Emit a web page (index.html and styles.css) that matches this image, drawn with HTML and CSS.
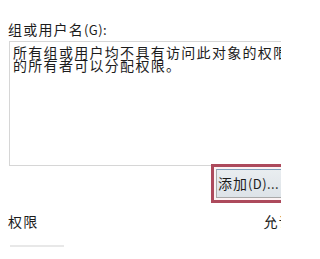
FILE: index.html
```html
<!DOCTYPE html>
<html lang="zh-CN">
<head>
<meta charset="utf-8">
<link rel="stylesheet" href="styles.css">
</head>
<body>
<div class="panel">
  <div class="label">组或用户名<span class="key">(G):</span></div>
  <div class="box">
    <div class="line">所有组或用户均不具有访问此对象的权限。但是，此对象</div>
    <div class="line">的所有者可以分配权限。</div>
  </div>
  <div class="actions">
    <div class="highlight">
      <div class="btn">添加<span class="key">(D)...</span></div>
    </div>
  </div>
  <div class="perm-row">
    <span>权限</span>
    <span>允许</span>
  </div>
  <div class="faint"></div>
</div>
</body>
</html>
```

FILE: styles.css
```css
html, body {
  margin: 0;
  padding: 0;
  background: #ffffff;
  overflow: hidden;
}
body {
  width: 281px;
  height: 259px;
  font-family: "Noto Sans CJK SC", "Noto Sans", sans-serif;
  font-size: 14px;
  color: #1c1c1c;
}
.panel {
  padding-left: 8px;
}
.label {
  margin-top: 21px;
  line-height: 16px;
  letter-spacing: 1.2px;
  white-space: nowrap;
}
.key {
  font-size: 13px;
  letter-spacing: 0.4px;
}
.box {
  box-sizing: border-box;
  margin-top: 3px;
  margin-left: 1px;
  width: 300px;
  height: 125px;
  border: 1px solid #d6d6d6;
  border-right: none;
  padding: 4px 0 0 3px;
  overflow: hidden;
}
.line {
  line-height: 13px;
  letter-spacing: 1.3px;
  white-space: nowrap;
}
.actions {
  display: flex;
  margin-top: -2px;
  padding-left: 203px;
}
.highlight {
  flex: none;
  width: 110px;
  border: 3px solid #ad4a5c;
  padding: 2px;
  background: #fbf3f4;
}
.btn {
  box-sizing: border-box;
  height: 29px;
  border: 1px solid #a9a9a9;
  border-top-color: #7e9fbb;
  background: linear-gradient(#e9edf0, #dde3e8);
  line-height: 27px;
  padding-left: 1px;
  letter-spacing: 1px;
  white-space: nowrap;
}
.perm-row {
  display: flex;
  justify-content: space-between;
  width: 286px;
  margin-top: 9px;
  line-height: 18px;
  letter-spacing: 1.2px;
  white-space: nowrap;
}
.faint {
  margin-top: 15px;
  margin-left: 2px;
  width: 54px;
  height: 2px;
  background: #e8e8e8;
}
```
